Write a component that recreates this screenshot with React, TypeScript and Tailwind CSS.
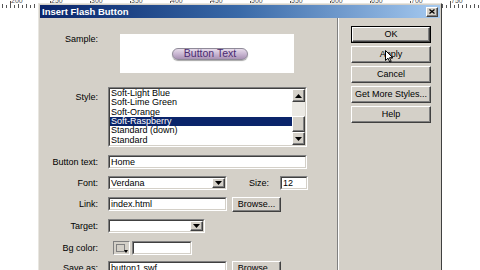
import React from "react";

const raised =
  "bg-[#d4d0c8] border border-t-white border-l-white border-b-[#404040] border-r-[#404040] shadow-[inset_-1px_-1px_0_#808080]";
const sunkenOuter =
  "border border-t-[#808080] border-l-[#808080] border-b-white border-r-white";
const sunkenInner =
  "border border-t-[#404040] border-l-[#404040] border-b-[#d4d0c8] border-r-[#d4d0c8] bg-white";

function DownTri() {
  return (
    <svg width="7" height="4" viewBox="0 0 7 4" className="block">
      <path d="M0 0 H7 L3.5 4 Z" fill="#000" />
    </svg>
  );
}
function UpTri() {
  return (
    <svg width="7" height="4" viewBox="0 0 7 4" className="block">
      <path d="M0 4 H7 L3.5 0 Z" fill="#000" />
    </svg>
  );
}

function Ruler() {
  const labels = [200, 250, 300, 350, 400, 450, 500, 550, 600, 650, 700, 750];
  const ticks: number[] = [];
  for (let x = 2; x < 480; x += 4) ticks.push(x);
  return (
    <svg width="480" height="9" className="block">
      {ticks.map((x, i) => (
        <line
          key={x}
          x1={x + 0.5}
          x2={x + 0.5}
          y1={i % 10 === 2 ? 1 : i % 2 === 0 ? 4 : 5}
          y2={8}
          stroke="#555"
          strokeWidth="1"
        />
      ))}
      {labels.map((l, i) => (
        <text
          key={l}
          x={11 + 40 * i}
          y={3}
          fontSize="7"
          fill="#555"
          fontFamily="Liberation Sans, Arial, sans-serif"
        >
          {l}
        </text>
      ))}
    </svg>
  );
}

function Label({ children, className = "" }: { children: React.ReactNode; className?: string }) {
  return (
    <div className={"w-[59px] shrink-0 text-right pr-[1px] leading-[11px] text-black " + className}>
      {children}
    </div>
  );
}

function TextInput({ w, value }: { w: string; value?: string }) {
  return (
    <div className={sunkenOuter + " h-[14px] " + w}>
      <div className={sunkenInner + " h-full w-full pl-[1px] leading-[10px] text-black whitespace-nowrap overflow-hidden"}>
        {value}
      </div>
    </div>
  );
}

function Select({ w, value }: { w: string; value?: string }) {
  return (
    <div className={sunkenOuter + " h-[14px] " + w}>
      <div className={sunkenInner + " h-full w-full flex items-stretch"}>
        <div className="flex-1 pl-[1px] leading-[10px] text-black whitespace-nowrap overflow-hidden">{value}</div>
        <div className={raised + " w-[13px] flex items-center justify-center"}>
          <DownTri />
        </div>
      </div>
    </div>
  );
}

function Btn({ children, w, isDefault = false }: { children: React.ReactNode; w: string; isDefault?: boolean }) {
  if (isDefault) {
    return (
      <div className={"border border-black h-[17px] " + w}>
        <div className={raised + " h-full w-full flex items-center justify-center leading-none text-black"}>
          {children}
        </div>
      </div>
    );
  }
  return (
    <div className={raised + " h-[17px] flex items-center justify-center leading-none text-black " + w}>
      {children}
    </div>
  );
}

export default function App() {
  const items = [
    "Soft-Light Blue",
    "Soft-Lime Green",
    "Soft-Orange",
    "Soft-Raspberry",
    "Standard (down)",
    "Standard",
  ];
  return (
    <div className="relative w-[480px] h-[270px] overflow-hidden bg-white font-['Liberation_Sans',Arial,sans-serif] text-[9px]">
      <Ruler />

      {/* Dialog window */}
      <div className="absolute left-[38px] top-[3px] w-[404px] h-[290px] bg-[#d4d0c8] border border-t-[#e8e6e0] border-l-[#e8e6e0] border-r-[#404040] border-b-[#404040] p-[1px] flex flex-col">
        {/* Title bar */}
        <div className="h-[13px] shrink-0 bg-linear-to-r from-[#0a246a] via-[#3a6aa8] to-[#a6caf0] flex items-center">
          <div className="flex-1 pl-[2px] text-white font-bold text-[9.5px] leading-[13px] whitespace-nowrap">
            Insert Flash Button
          </div>
          <div className={raised + " w-[12px] h-[10px] mr-[2px] flex items-center justify-center"}>
            <svg width="6" height="5" viewBox="0 0 6 5" className="block">
              <path d="M0.5 0.5 L5.5 4.5 M5.5 0.5 L0.5 4.5" stroke="#000" strokeWidth="1.3" />
            </svg>
          </div>
        </div>

        {/* Body */}
        <div className="flex flex-1">
          {/* Left pane */}
          <div className="w-[297px] shrink-0 flex flex-col">
            {/* Sample */}
            <div className="flex mt-[16px]">
              <Label>Sample:</Label>
              <div className="ml-[21px] w-[174px] h-[39px] bg-white flex items-center justify-center">
                <div className="w-[76px] h-[12px] rounded-full border border-[#8f8a98] bg-linear-to-b from-[#e6dcea] via-[#c9b6d2] to-[#a892b4] shadow-[0_1px_1px_rgba(0,0,0,0.35)] flex items-center justify-center text-[10.5px] leading-none text-[#4a2a70] ml-[6px]">
                  Button Text
                </div>
              </div>
            </div>

            {/* Style */}
            <div className="flex mt-[14px]">
              <Label className="mt-[5px]">Style:</Label>
              <div className={sunkenOuter + " ml-[9px] w-[199px] h-[60px]"}>
                <div className={sunkenInner + " h-full w-full flex"}>
                  <div className="flex-1 flex flex-col">
                    {items.map((it, i) => (
                      <div
                        key={it}
                        className={
                          "flex-1 pl-[1px] flex items-center leading-none whitespace-nowrap " +
                          (i === 3 ? "bg-[#0a246a] text-white" : "text-black")
                        }
                      >
                        {it}
                      </div>
                    ))}
                  </div>
                  <div className="w-[13px] flex flex-col bg-[#ebe9e4]">
                    <div className={raised + " h-[13px] flex items-center justify-center"}>
                      <UpTri />
                    </div>
                    <div className="flex-1" />
                    <div className={raised + " h-[16px]"} />
                    <div className={raised + " h-[13px] flex items-center justify-center"}>
                      <DownTri />
                    </div>
                  </div>
                </div>
              </div>
            </div>

            {/* Button text */}
            <div className="flex items-center h-[14px] mt-[8px]">
              <Label>Button text:</Label>
              <div className="ml-[9px]">
                <TextInput w="w-[199px]" value="Home" />
              </div>
            </div>

            {/* Font / Size */}
            <div className="flex items-center h-[14px] mt-[7px]">
              <Label>Font:</Label>
              <div className="ml-[9px]">
                <Select w="w-[119px]" value="Verdana" />
              </div>
              <div className="ml-[22px] leading-[11px] text-black">Size:</div>
              <div className="ml-[11px]">
                <TextInput w="w-[28px]" value="12" />
              </div>
            </div>

            {/* Link */}
            <div className="flex items-center h-[14px] mt-[7px]">
              <Label>Link:</Label>
              <div className="ml-[9px]">
                <TextInput w="w-[119px]" value="index.html" />
              </div>
              <div className="ml-[5px]">
                <div className={raised + " h-[15px] w-[49px] flex items-center justify-center leading-none text-black"}>
                  Browse...
                </div>
              </div>
            </div>

            {/* Target */}
            <div className="flex items-center h-[14px] mt-[8px]">
              <Label>Target:</Label>
              <div className="ml-[9px]">
                <Select w="w-[97px]" />
              </div>
            </div>

            {/* Bg color */}
            <div className="flex items-center h-[14px] mt-[8px]">
              <Label>Bg color:</Label>
              <div className="ml-[14px] w-[17px] h-[14px] border border-t-[#808080] border-l-[#808080] border-b-white border-r-white bg-[#d4d0c8] relative">
                <div className="absolute left-[2px] top-[2px] w-[9px] h-[8px] border border-[#808080] bg-[#d4d0c8]" />
                <div className="absolute right-[1px] bottom-[1px]">
                  <svg width="4" height="3" viewBox="0 0 4 3" className="block">
                    <path d="M0 0 H4 L2 3 Z" fill="#000" />
                  </svg>
                </div>
              </div>
              <div className="ml-[2px]">
                <TextInput w="w-[60px]" />
              </div>
            </div>

            {/* Save as */}
            <div className="flex items-center h-[14px] mt-[6px]">
              <Label>Save as:</Label>
              <div className="ml-[9px]">
                <TextInput w="w-[119px]" value="button1.swf" />
              </div>
              <div className="ml-[5px]">
                <div className={raised + " h-[15px] w-[49px] flex items-center justify-center leading-none text-black"}>
                  Browse...
                </div>
              </div>
            </div>
          </div>

          {/* Separator */}
          <div className="w-[2px] shrink-0 border-l border-l-[#808080] border-r border-r-white" />

          {/* Right pane */}
          <div className="flex-1 flex flex-col pt-[8px] pl-[12px] gap-[3px]">
            <Btn w="w-[80px]" isDefault>
              OK
            </Btn>
            <Btn w="w-[80px]">Apply</Btn>
            <Btn w="w-[80px]">Cancel</Btn>
            <Btn w="w-[80px]">Get More Styles...</Btn>
            <Btn w="w-[80px]">Help</Btn>
          </div>
        </div>
      </div>

      {/* Mouse cursor */}
      <svg width="9" height="13" viewBox="0 0 9 13" className="absolute left-[385px] top-[50px]">
        <path
          d="M0.5 0.5 L0.5 10.5 L3 8.2 L4.8 12 L6.2 11.4 L4.5 7.7 L7.8 7.7 Z"
          fill="#fff"
          stroke="#000"
          strokeWidth="1"
          strokeLinejoin="round"
        />
      </svg>
    </div>
  );
}
